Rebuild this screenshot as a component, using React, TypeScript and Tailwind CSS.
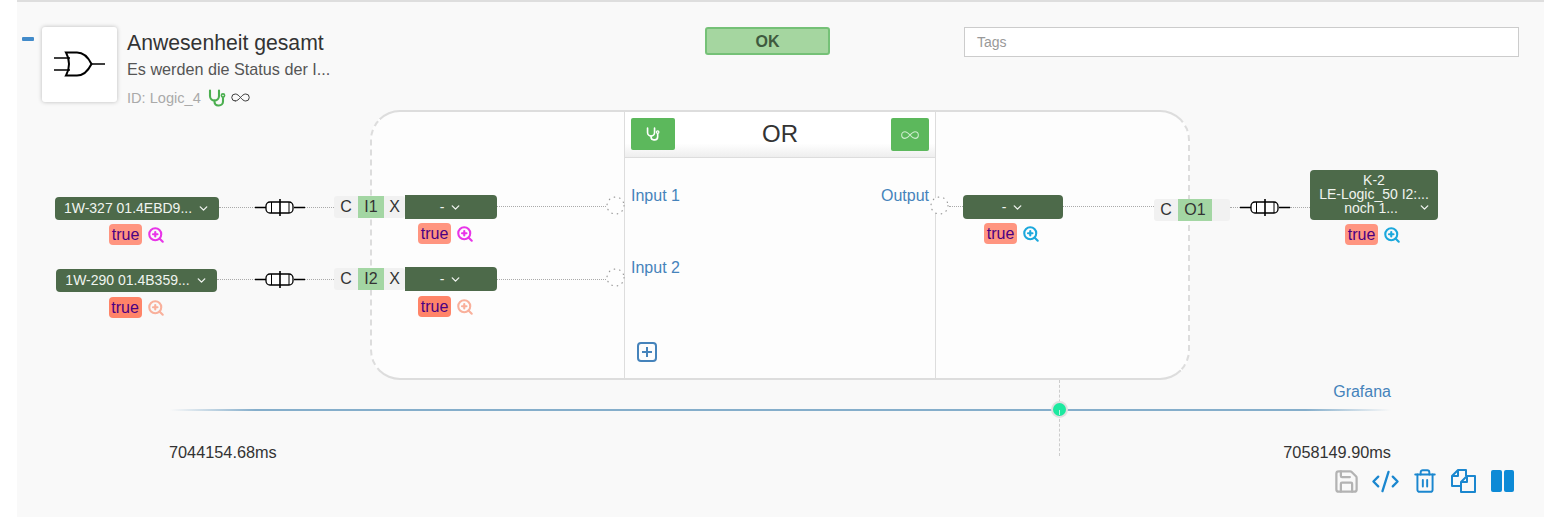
import type { ReactNode } from "react";
import { ChevronDown, CodeXml, Infinity as InfinityIcon, Save, Trash2, ZoomIn } from "lucide-react";

function Steth({ size, className }: { size: number; className: string }) {
  return (
    <svg className={className} width={size} height={size} viewBox="0 0 18 18" fill="none" stroke="currentColor" strokeWidth="2.1" strokeLinecap="round">
      <path d="M2 1.5V7a4.5 4.5 0 0 0 9 0V1.5" />
      <path d="M6.5 11.5V13a3.5 3.5 0 0 0 3.5 3.5h1a4 4 0 0 0 4-4V9" />
      <circle cx="15" cy="6.5" r="1.6" strokeWidth="1.6" />
    </svg>
  );
}

function Fuse({ className = "" }: { className?: string }) {
  return (
    <svg className={`shrink-0 ${className}`} width="50" height="18" viewBox="0 0 50 18" fill="none" stroke="#000">
      <path d="M0 8.5h11M39 8.5h11" strokeWidth="1.4" />
      <rect x="11" y="3" width="27" height="11" rx="4" fill="#fff" strokeWidth="1.3" />
      <path d="M16.5 3v11M34 3v11" strokeWidth="1" />
      <path d="M25 0v17" strokeWidth="1.6" />
    </svg>
  );
}

function Chevron({ className = "" }: { className?: string }) {
  return <ChevronDown size={13} strokeWidth={2.5} className={className} />;
}

// dropdown with its value badge + zoom icon below
function Node({ label, width, height = "h-[24px]", low, badge, icon, flat, tall, row = "" }: {
  label: ReactNode; width: string; height?: string; low?: boolean; badge: string; icon: string; flat?: boolean; tall?: boolean; row?: string;
}) {
  return (
    <div className={`flex shrink-0 flex-col items-center ${width}`}>
      {tall ? (
        <div className="relative h-[50px] w-full rounded-[4px] bg-[#4d6a4a] pt-[3px] text-center text-[14px] leading-[14px] text-[#f0f4ef]">
          {label}
          <Chevron className="absolute bottom-[6px] right-[7px]" />
        </div>
      ) : (
        <div className={`flex w-full items-center justify-center gap-[5px] bg-[#4d6a4a] text-[14px] text-[#f0f4ef] ${height} ${flat ? "rounded-r-[4px]" : "rounded-[4px]"}`}>
          <span>{label}</span>
          <Chevron />
        </div>
      )}
      <div className={`flex items-center gap-[5px] ${low ? "mt-[5px]" : "mt-[4px]"} ${row}`}>
        <span className={`flex h-[21px] w-[33px] items-center justify-center rounded-[4px] text-[16px] text-[#4b0082] ${badge}`}>true</span>
        <ZoomIn size={18} strokeWidth={2.8} className={icon} />
      </div>
    </div>
  );
}

function Port({ className = "" }: { className?: string }) {
  return (
    <svg className={`shrink-0 ${className}`} width="19" height="19" viewBox="0 0 19 19" fill="#fefefe" stroke="#999" strokeWidth="1.2" strokeLinecap="round" strokeDasharray="0.5 5">
      <circle cx="9.5" cy="9.5" r="8.5" />
    </svg>
  );
}

function Link({ className }: { className: string }) {
  return <div className={`h-0 shrink-0 border-t border-dotted border-[#aaa] ${className}`} />;
}

function Pins({ left, name, right, nameWidth, className }: { left: string; name: string; right: string; nameWidth: string; className: string }) {
  return (
    <div className={`flex h-[22px] shrink-0 text-[16px] text-[#333] ${className}`}>
      <div className="flex w-[24px] items-center justify-center rounded-l-[3px] bg-[#f1f1f1]">{left}</div>
      <div className={`flex items-center justify-center bg-[#a3d6a3] ${nameWidth}`}>{name}</div>
      <div className="flex flex-1 items-center justify-center rounded-r-[3px] bg-[#f1f1f1]">{right}</div>
    </div>
  );
}

export default function App() {
  return (
    <div className="h-[517px] w-[1549px] overflow-hidden bg-white pl-[17px] pr-[5px] font-['Liberation_Sans',Arial,sans-serif]">
      <div className="h-full border-t-2 border-[#dedede] bg-[#f9f9f9]">
        {/* Header */}
        <div className="flex h-[108px] items-start pt-[25px]">
          <div className="ml-[5px] mt-[10px] h-[4px] w-[12px] rounded-[1px] bg-[#428bca]" />
          <div className="ml-[8px] flex h-[75px] w-[75px] items-center justify-center rounded-[3px] bg-white pb-[2px] shadow-[0_0_4px_rgba(0,0,0,0.25)]">
            <svg width="51" height="26" viewBox="0 0 51 26" fill="none" stroke="#000">
              <path d="M0 7h16M0 19h16M37 13h14" strokeWidth="1.5" />
              <path d="M12 1.5h11c6 0 11 4.5 14.500 11.500-3.500 7-8.500 11.500-14.500 11.500H12c4-7 4-16 0-23z" strokeWidth="2" />
            </svg>
          </div>
          <div className="ml-[10px] w-[220px]">
            <div className="mt-[2px] text-[21.2px] leading-[28px] text-[#333]">Anwesenheit gesamt</div>
            <div className="mt-[2px] text-[16.2px] leading-[20px] text-[#555]">Es werden die Status der I...</div>
            <div className="mt-[8px] flex items-center text-[14.600px] leading-[20px] text-[#aaa]">
              <span>ID: Logic_4</span>
              <Steth size={18} className="ml-[7px] text-[#4caf50]" />
              <InfinityIcon size={21} strokeWidth={1.1} className="ml-[4px] text-[#333]" />
            </div>
          </div>
          <div className="ml-[358px] flex h-[28px] w-[125px] items-center justify-center rounded-[3px] border-2 border-[#75c177] bg-[#a5d6a0] pt-[1px] text-[16px] font-bold text-[#3f5a3f]">
            OK
          </div>
          <div className="ml-[134px] flex h-[30px] w-[555px] items-center border border-[#ccc] bg-white px-[12px] text-[14px] text-[#999]">
            Tags
          </div>
        </div>

        {/* Diagram canvas */}
        <div className="relative -ml-[17px]">
          <div className="ml-[370px] flex h-[270px] w-[820px] rounded-[30px] border-2 border-[#ddd] bg-[#fdfdfd] [border-left-style:dashed] [border-right-style:dashed]">
            <div className="w-[252px]" />
            <div className="flex w-[312px] flex-col border-x border-[#ddd]">
              <div className="relative flex h-[46px] items-start justify-between border-b border-[#ddd] bg-gradient-to-b from-white from-70% to-[#eeeeee] px-[6px] pt-[6px]">
                <div className="flex h-[32px] w-[44px] items-center justify-center rounded-[2px] bg-[#5cb85c] text-white">
                  <Steth size={14} className="" />
                </div>
                <div className="-ml-[6px] mt-[2px] text-[24px] leading-[28px] text-[#333]">OR</div>
                <div className="flex h-[33px] w-[38px] items-center justify-center rounded-[2px] bg-[#5cb85c] text-[#cdeccd]">
                  <InfinityIcon size={20} strokeWidth={1.3} />
                </div>
              </div>
              <div className="flex flex-1 flex-col px-[6px] pt-[28px] text-[16px] leading-[20px] text-[#4583bb]">
                <div className="flex h-[72px] justify-between">
                  <span>Input 1</span>
                  <span>Output</span>
                </div>
                <div className="h-[72px]">Input 2</div>
                <svg className="ml-[5px] mt-[11px]" width="22" height="22" viewBox="0 0 22 22" fill="none" stroke="#4583bb" strokeWidth="2">
                  <rect x="2" y="2" width="18" height="18" rx="3" />
                  <path d="M11 6v10M6 11h10" />
                </svg>
              </div>
            </div>
          </div>

          {/* Input wires */}
          <div className="absolute left-[55px] top-[87px] flex items-start">
            <Node label="1W-327 01.4EBD9..." height="h-[23px]" width="w-[164px]" badge="bg-[#ff9580]" icon="text-[#e835e8]" />
            <Link className="mt-[10px] w-[36px]" />
            <Fuse className="mt-[2px]" />
            <Link className="mt-[10px] w-[29px]" />
            <Pins left="C" name="I1" right="X" nameWidth="w-[26px]" className="-mt-[1px] w-[71px]" />
            <div className="-mt-[2px]">
              <Node label="-" flat width="w-[92px]" row="pr-[10px]" badge="bg-[#ff9580]" icon="text-[#e835e8]" />
            </div>
            <Link className="mt-[9px] w-[109px]" />
            <Port className="-mt-[1px]" />
          </div>
          <div className="absolute left-[56px] top-[159px] flex items-start">
            <Node label="1W-290 01.4B359..." height="h-[23px]" low width="w-[161px]" badge="bg-[#ff8468]" icon="text-[#f9b09b]" />
            <Link className="mt-[10px] w-[38px]" />
            <Fuse className="mt-[2px]" />
            <Link className="mt-[10px] w-[29px]" />
            <Pins left="C" name="I2" right="X" nameWidth="w-[26px]" className="-mt-[1px] w-[71px]" />
            <div className="-mt-[2px]">
              <Node label="-" flat low width="w-[92px]" row="pr-[10px]" badge="bg-[#ff8468]" icon="text-[#f9b09b]" />
            </div>
            <Link className="mt-[10px] w-[109px]" />
            <Port className="-mt-[1px]" />
          </div>

          {/* Output wire */}
          <div className="absolute left-[930px] top-[60px] flex items-start">
            <Port className="mt-[26px]" />
            <Link className="mt-[36px] w-[14px]" />
            <div className="mt-[25px]">
              <Node label="-" width="w-[100px]" row="pr-[2px]" badge="bg-[#ff9580]" icon="text-[#1ba8dc]" />
            </div>
            <Link className="mt-[36px] w-[91px]" />
            <Pins left="C" name="O1" right="" nameWidth="w-[34px]" className="mt-[29px] w-[76px]" />
            <Link className="mt-[37px] w-[10px]" />
            <Fuse className="mt-[29px]" />
            <Link className="mt-[37px] w-[20px]" />
            <Node
              tall
              width="w-[128px]"
              row="pr-[2px]"
              badge="bg-[#ff9580]"
              icon="text-[#1ba8dc]"
              label={
                <>
                  <div>K-2</div>
                  <div>LE-Logic_50 I2:...</div>
                  <div className="pr-[6px]">noch 1...</div>
                </>
              }
            />
          </div>

          {/* Timeline */}
          <div className="relative ml-[169px] mt-[3px] w-[1222px]">
            <div className="text-right text-[16px] leading-[18px] text-[#4583bb]">Grafana</div>
            <div className="ml-[1px] mt-[8px] h-[2px] bg-[linear-gradient(to_right,transparent,#85aecb_7%,#85aecb_93%,transparent)]" />
            <div className="absolute left-[890px] -top-[3px] h-[76px] border-l border-dashed border-[#ccc]" />
            <div className="absolute left-[882px] top-[18px] flex h-[17px] w-[17px] items-end justify-center rounded-full border-[2px] border-[#e0e0e0] bg-[#1de9a0]">
              <div className="mb-[1px] h-[5px] w-px bg-white/70" />
            </div>
            <div className="mt-[32px] flex justify-between text-[16.300px] leading-[18px] text-[#333]">
              <span>7044154.68ms</span>
              <span>7058149.90ms</span>
            </div>
          </div>
        </div>

        {/* Toolbar */}
        <div className="mt-[5px] flex h-[30px] items-center justify-end pr-[30px]">
          <Save size={27} strokeWidth={2} className="text-[#b3b3b3]" />
          <CodeXml size={29} strokeWidth={1.9} className="ml-[11px] text-[#1b87cf]" />
          <Trash2 size={26} strokeWidth={1.8} className="ml-[12px] text-[#1b87cf]" />
          <svg className="ml-[13px]" width="25" height="24" viewBox="0 0 25 24" fill="none" stroke="#1b87cf" strokeWidth="2" strokeLinejoin="round">
            <path d="M9 17H1V7l6-6h8v6" />
            <path d="M7 1v6H1" />
            <path d="M10 23V13l6-6h8v16z" />
            <path d="M16 7v6h-6" />
          </svg>
          <div className="ml-[15px] flex h-[22px] gap-[2px]">
            <div className="w-[11px] rounded-[2px] bg-[#0d8ad6]" />
            <div className="w-[10px] rounded-[2px] bg-[#0d8ad6]" />
          </div>
        </div>
      </div>
    </div>
  );
}
